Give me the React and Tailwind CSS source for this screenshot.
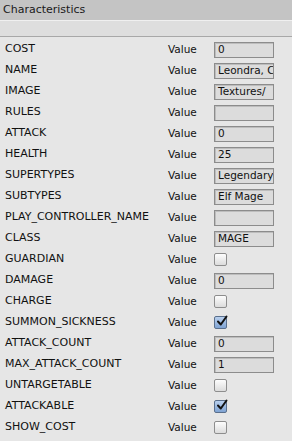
import React from "react";

const rows = [
  ["COST", "text", "0"],
  ["NAME", "text", "Leondra, C"],
  ["IMAGE", "text", "Textures/"],
  ["RULES", "text", ""],
  ["ATTACK", "text", "0"],
  ["HEALTH", "text", "25"],
  ["SUPERTYPES", "text", "Legendary"],
  ["SUBTYPES", "text", "Elf Mage"],
  ["PLAY_CONTROLLER_NAME", "text", ""],
  ["CLASS", "text", "MAGE"],
  ["GUARDIAN", "check", false],
  ["DAMAGE", "text", "0"],
  ["CHARGE", "check", false],
  ["SUMMON_SICKNESS", "check", true],
  ["ATTACK_COUNT", "text", "0"],
  ["MAX_ATTACK_COUNT", "text", "1"],
  ["UNTARGETABLE", "check", false],
  ["ATTACKABLE", "check", true],
  ["SHOW_COST", "check", false],
];

function Check({ on }) {
  if (on) {
    return (
      <div className="w-[13px] h-[13px] rounded-[2px] border border-[#5a6f8c] bg-gradient-to-b from-[#b9d0ee] to-[#7fa3d3] relative">
        <svg className="absolute left-[1px] top-[-2px]" width="13" height="13" viewBox="0 0 13 13">
          <path d="M2 6.5 L4.8 9.5 L10.5 1.5" fill="none" stroke="#111" strokeWidth="2" strokeLinecap="round" strokeLinejoin="round" />
        </svg>
      </div>
    );
  }
  return (
    <div className="w-[13px] h-[13px] rounded-[2px] border border-[#8d8d8d] bg-gradient-to-b from-[#fdfdfd] to-[#dcdcdc]" />
  );
}

export default function App() {
  return (
    <div className="w-[292px] h-[441px] bg-[#e6e6e6] overflow-hidden text-[#111]" style={{ fontFamily: '"DejaVu Sans", sans-serif' }}>
      <div className="h-[20px] bg-[#c4c4c4] flex items-center pl-[3px] text-[11px] text-[#1a1a1a]">Characteristics</div>
      <div className="h-[1px] bg-[#f0f0f0]" />
      <div className="h-[16px] bg-[#dedede] border-b border-[#a8a8a8]" />
      <div className="pt-[2px]">
        {rows.map(([label, kind, val]) => (
          <div key={label} className="h-[21px] flex items-center text-[10.5px]">
            <div className="w-[168px] pl-[5px] whitespace-nowrap text-[11px]">{label}</div>
            <div className="w-[46px]">Value</div>
            {kind === "text" ? (
              <div className="w-[60px] h-[16px] border border-[#8c8c8c] bg-[#dcdcdc] shadow-[inset_1px_1px_0_#bdbdbd] pl-[3px] flex items-center overflow-hidden whitespace-nowrap">
                {val}
              </div>
            ) : (
              <Check on={val} />
            )}
          </div>
        ))}
      </div>
    </div>
  );
}
